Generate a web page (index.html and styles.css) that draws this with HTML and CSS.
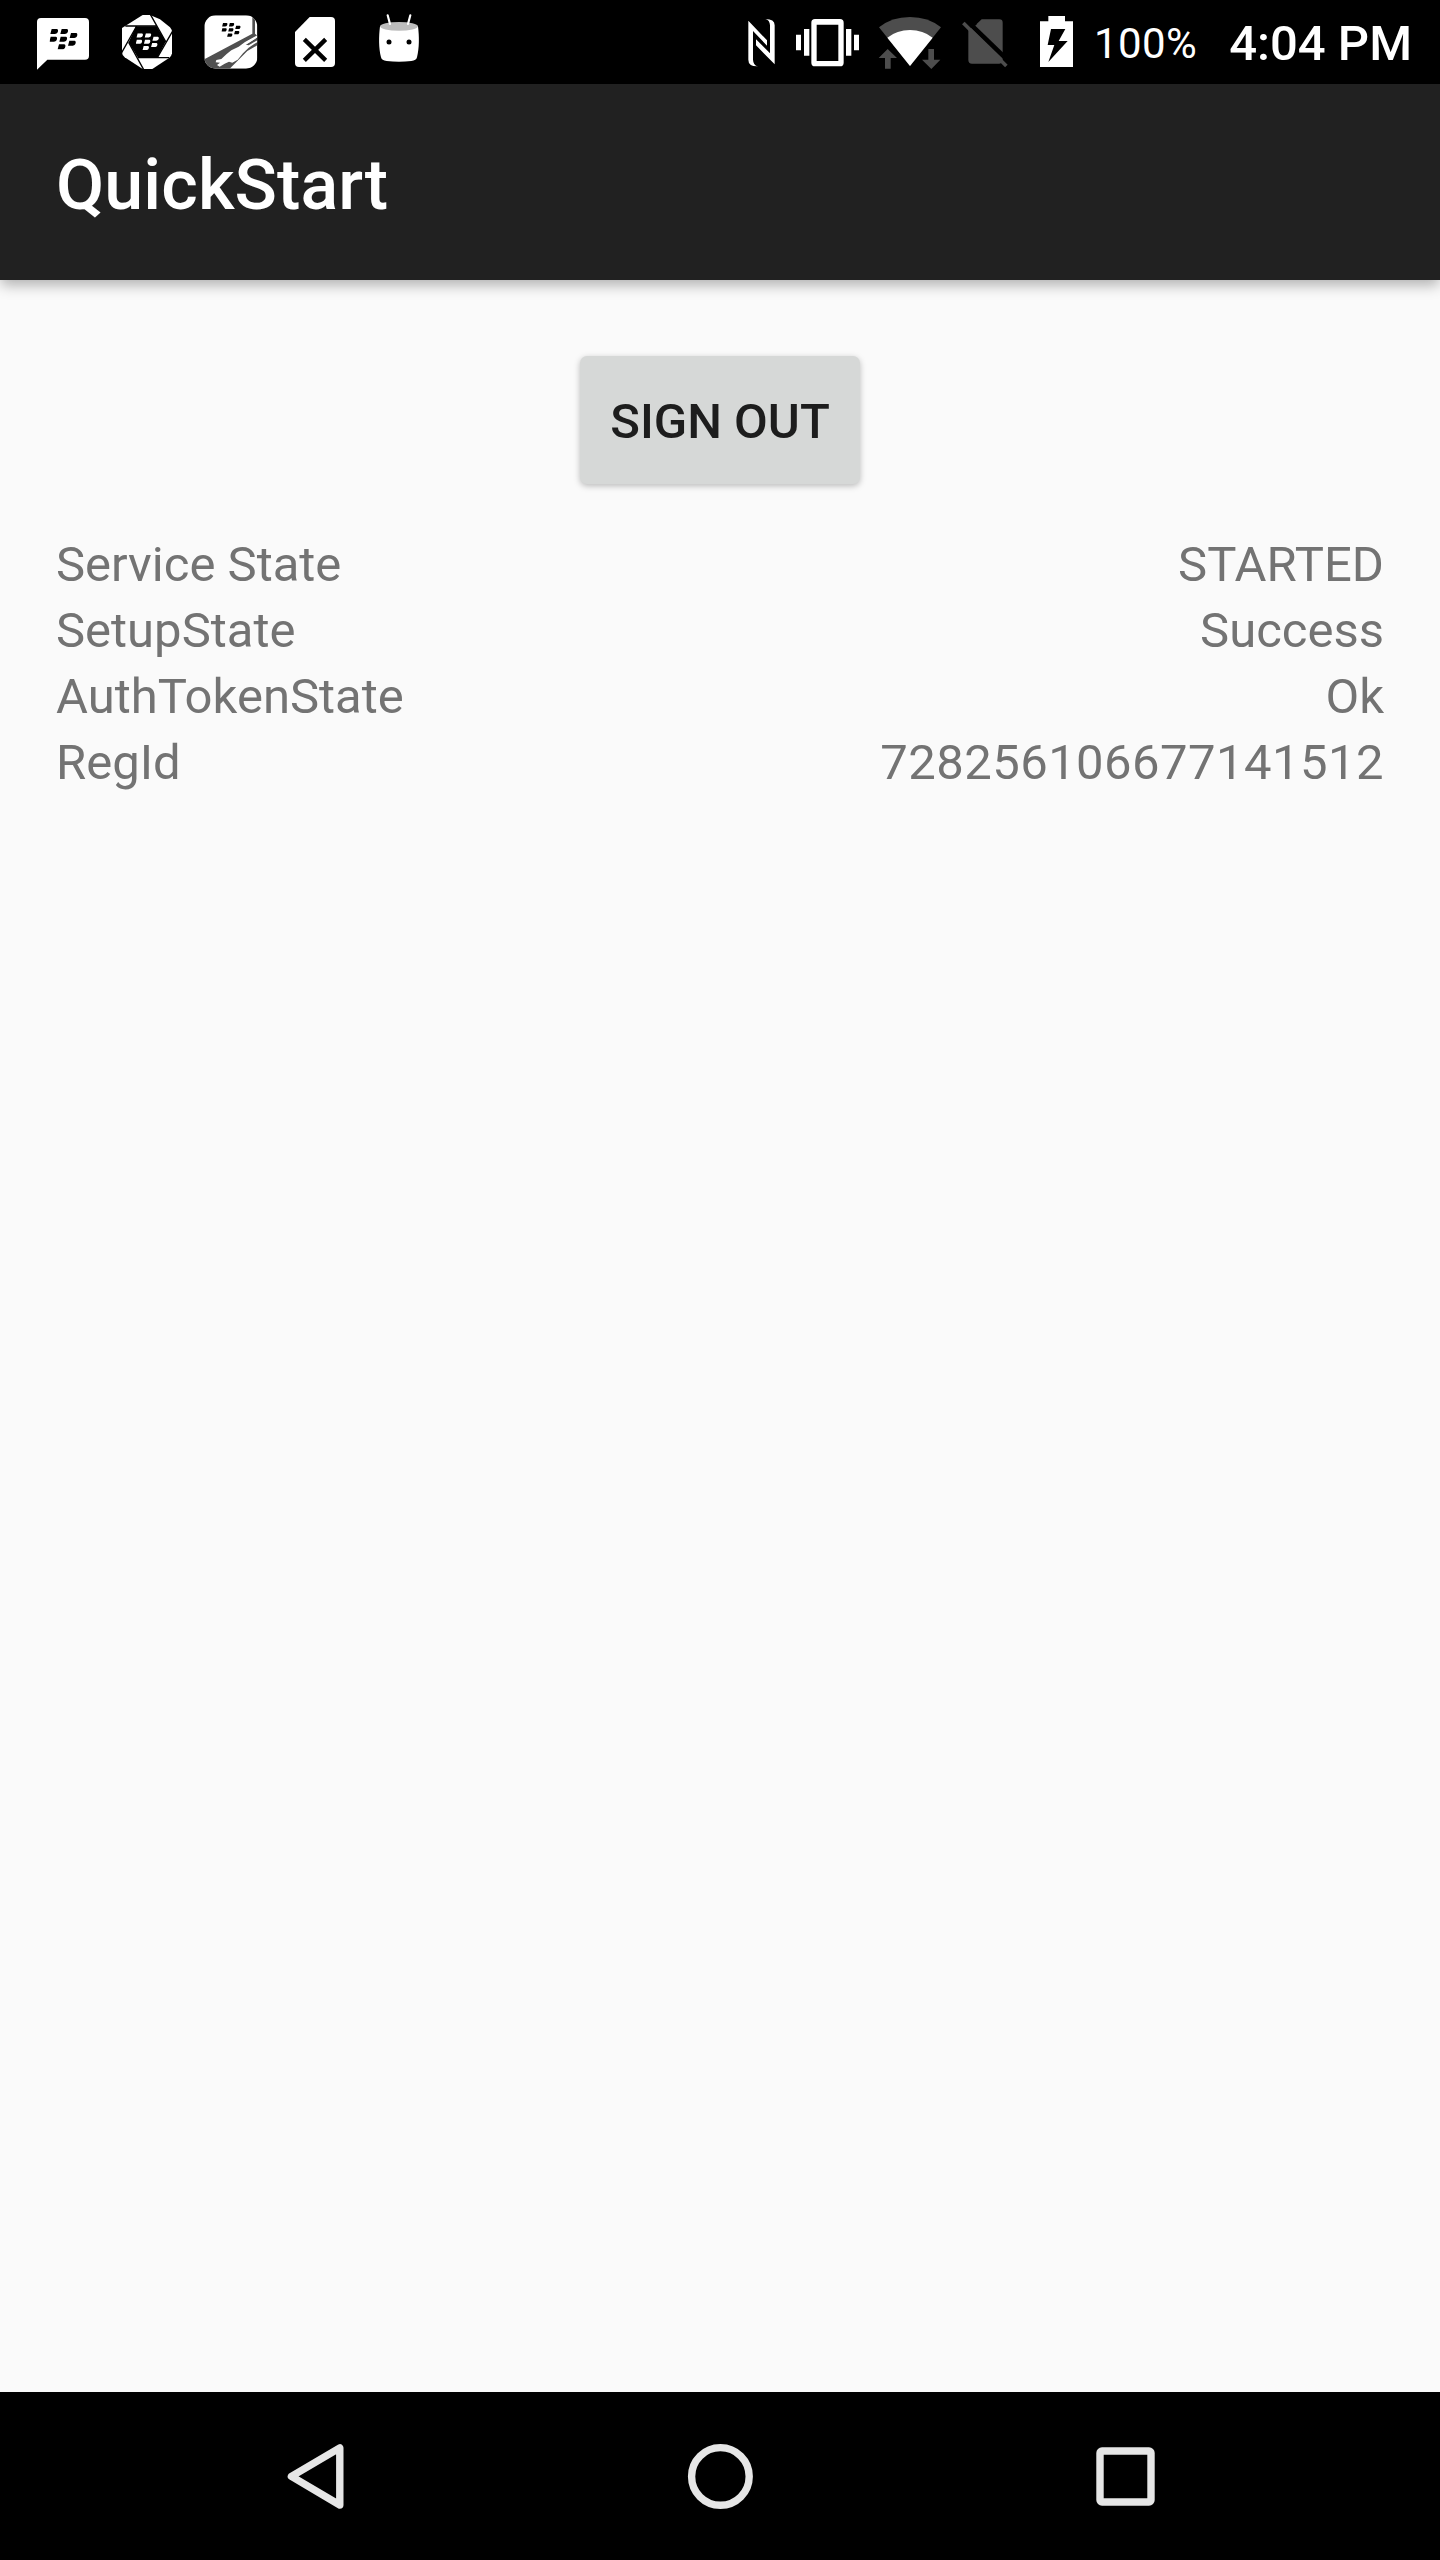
FILE: index.html
```html
<!DOCTYPE html>
<html lang="en">
<head>
<meta charset="utf-8">
<title>QuickStart</title>
<link rel="stylesheet" href="styles.css">
</head>
<body>
<svg class="defs" aria-hidden="true">
  <symbol id="bb" viewBox="0 0 84 62">
    <g id="pills">
      <path d="M6 0h16c4 1 4 6 2 10s-5 5-8 5H2z"/>
      <path d="M36 0h16c4 1 4 6 2 10s-5 5-8 5H32z"/>
      <path d="M3 23h16c4 1 4 6 2 10s-5 5-8 5H-1z"/>
      <path d="M33 23h16c4 1 4 6 2 10s-5 5-8 5H29z"/>
      <path d="M64 12h16c4 1 4 6 2 10s-5 5-8 5H60z"/>
      <path d="M59 35h16c4 1 4 6 2 10s-5 5-8 5H55z"/>
      <path d="M28 46h16c4 1 4 6 2 10s-5 5-8 5H24z"/>
    </g>
  </symbol>
</svg>
<div class="screen">
  <header class="status">
    <div class="notifications">
      <svg class="slot" viewBox="3 0 252 252">
        <path fill="#fff" d="M63 54H195Q207 54 207 66V167Q207 179 195 179H82L51 209V66Q51 54 63 54Z"/>
        <use href="#bb" x="89" y="87" width="84" height="62"/>
      </svg>
      <svg class="slot" viewBox="255 0 252 252">
        <path fill="#fff" d="M368 45H390L420 58L450 82Q456 88 456 98V160Q455 168 447 174L397 207H368L314 172Q306 166 306 156V84Z"/>
        <path d="M348 79H410L437 125L412 173H354L326 127Z"/>
        <path fill="none" stroke="#000" stroke-width="4" d="M316 78H410M391 43L437 125M457 95L412 173M447 173H354M371 209L326 127M305 158L350 78"/>
        <use href="#bb" x="348" y="100" width="69" height="51" fill="#fff"/>
      </svg>
      <svg class="slot" viewBox="-3 0 252 252">
        <clipPath id="tile"><rect x="43" y="46" width="159" height="160" rx="34"/></clipPath>
        <g clip-path="url(#tile)">
          <path fill="#fff" d="M43 46H202V206H43Z"/>
          <path fill="#505050" d="M43 178L187 101V46H195V101L202 107L172 124L166 135L202 112V122L184 133L202 126V136L172 153L119 206H43Z"/>
          <path fill="#fff" d="M202 106L165 126L146 140L124 151L110 162L94 177L79 180L77 187L90 188L81 195L89 200L104 191L117 185L127 188L143 179L159 160L176 143L202 126V121L176 136L167 134L202 112Z"/>
        </g>
        <use href="#bb" x="94" y="69" width="59" height="42"/>
      </svg>
      <svg class="slot" viewBox="249 0 252 252">
        <path fill="#fff" d="M359 51H423Q435 51 435 63V189Q435 201 423 201H327Q315 201 315 189V96Z"/>
        <path fill="none" stroke="#000" stroke-width="13" d="M343 118L407 181M407 118L343 181"/>
      </svg>
      <svg class="slot" viewBox="501 0 252 252">
        <path fill="#fff" d="M570 79C566 110 566 145 573 172Q575 182 590 183Q627 188 664 183Q679 182 681 172C688 145 688 110 684 79Z"/>
        <ellipse cx="627" cy="79" rx="57" ry="13" fill="#bdbdbd"/>
        <path fill="none" stroke="#fff" stroke-width="6.5" stroke-linecap="round" d="M593 46L600 72M661 46L654 72"/>
        <circle cx="597" cy="126" r="7.5"/><circle cx="657" cy="126" r="7.5"/>
      </svg>
    </div>
    <div class="system">
      <svg class="nfc" viewBox="0 0 180 252">
        <path fill="#fff" d="M55 62L111 121V137L69 93V179Q70 197 84 199Q55 200 55 179ZM134 193L78 136V118L120 160V76Q119 60 106 57Q134 57 134 76Z"/>
      </svg>
      <svg class="vibrate" viewBox="180 0 216 252">
        <path fill="#fff" fill-rule="evenodd" d="M255 57H330Q341 57 341 68V188Q341 199 330 199H255Q244 199 244 188V68Q244 57 255 57ZM260 74V183H325V74Z"/>
        <path fill="#fff" d="M198 104h15v47h-15zM222 87h16v80h-16zM348 87h16v80h-16zM372 104h15v47h-15z"/>
      </svg>
      <svg class="wifi" viewBox="396 0 264 252">
        <path fill="#4d4d4d" d="M447 82Q485 51 540 51T633 82L540 198Z"/>
        <path fill="#fff" d="M472 113Q501 90 540 90T608 113L540 198Z"/>
        <path fill="#4d4d4d" d="M473 147L501 174H482V206H465V174H446ZM604 207L576 179H595V147H612V179H631Z"/>
      </svg>
      <svg class="sim" viewBox="30 0 240 252">
        <path fill="#4d4d4d" d="M125 58H178Q188 58 188 68V181Q188 191 178 191H96Q85 191 85 180V76H106Z"/>
        <path stroke="#000" stroke-width="14" d="M74 56L210 187"/>
        <path d="M70 64L111 72L98 84L80 84Z"/>
        <path stroke="#4d4d4d" stroke-width="11" d="M70 69L199 198"/>
      </svg>
      <svg class="battery" viewBox="270 0 180 252">
        <path fill="#fff" d="M325 48H375V64H399V201H300V64H325Z"/>
        <path d="M333 87H376L356 123H383L325 186L343 135H323Z"/>
      </svg>
      <span class="percent">100%</span>
      <span class="clock">4:04 PM</span>
    </div>
  </header>
  <div class="appbar"><h1 class="title">QuickStart</h1></div>
  <main class="content">
    <button class="signout" type="button">SIGN OUT</button>
    <dl class="states">
      <div class="row"><dt>Service State</dt><dd>STARTED</dd></div>
      <div class="row"><dt>SetupState</dt><dd>Success</dd></div>
      <div class="row"><dt>AuthTokenState</dt><dd>Ok</dd></div>
      <div class="row"><dt>RegId</dt><dd class="number">728256106677141512</dd></div>
    </dl>
  </main>
  <nav class="navbar">
    <svg class="key" viewBox="0 0 84 84"><path d="M66.8 13.9V71L18.4 42.4Z"/></svg>
    <svg class="key" viewBox="0 0 84 84"><circle cx="42.4" cy="42.4" r="28.8"/></svg>
    <svg class="key" viewBox="0 0 84 84"><rect x="17" y="17" width="51" height="51" rx="2"/></svg>
  </nav>
</div>
</body>
</html>
```
FILE: styles.css
```css
* { box-sizing: border-box; }
body { margin: 0; background: #fafafa; font-family: Roboto, sans-serif; }
svg { display: block; flex: none; }
.defs { position: absolute; width: 0; height: 0; }
.screen { display: flex; flex-direction: column; width: 1440px; height: 2560px; background: #fafafa; }

.status { display: flex; justify-content: space-between; flex: none; height: 84px; padding-left: 21px; background: #000; color: #fff; }
.notifications, .system { display: flex; align-items: center; }
.slot { width: 84px; height: 84px; }
.system { width: 710px; }
.system svg { height: 84px; }
.nfc, .battery { width: 60px; }
.vibrate { width: 72px; }
.wifi { width: 88px; }
.sim { width: 80px; }
.percent { margin-left: 4px; padding-top: 4px; font-size: 42px; line-height: 80px; letter-spacing: .4px; }
.clock { margin-left: auto; padding: 4px 28px 0 0; font-size: 49px; font-weight: 500; line-height: 80px; white-space: nowrap; }

.appbar { display: flex; align-items: center; flex: none; height: 196px; padding: 6px 56px 0; background: #212121; box-shadow: 0 6px 13px -1px rgba(0, 0, 0, .3); }
.title { margin: 0; color: #fff; font-size: 70px; font-weight: 500; line-height: 82px; letter-spacing: .1px; }

.content { display: flex; flex: 1; flex-direction: column; align-items: center; padding: 76px 56px 0; }
.signout { width: 280px; height: 128px; padding: 2px 0 0; border: 0; border-radius: 7px; background: #d6d8d7; box-shadow: 0 2px 6px rgba(0, 0, 0, .26); color: #1d1d1d; font: 500 49px/57px Roboto, sans-serif; white-space: nowrap; }
.states { align-self: stretch; margin: 48px 0 0; color: #737373; font-size: 49px; line-height: 66px; }
.row { display: flex; justify-content: space-between; }
dd { margin: 0; }
.number { letter-spacing: .45px; }

.navbar { display: flex; flex: none; align-items: center; justify-content: center; gap: 321px; height: 168px; background: #000; }
.key { width: 84px; height: 84px; fill: none; stroke: #e6e6e6; stroke-width: 7.4; stroke-linejoin: round; }
```
